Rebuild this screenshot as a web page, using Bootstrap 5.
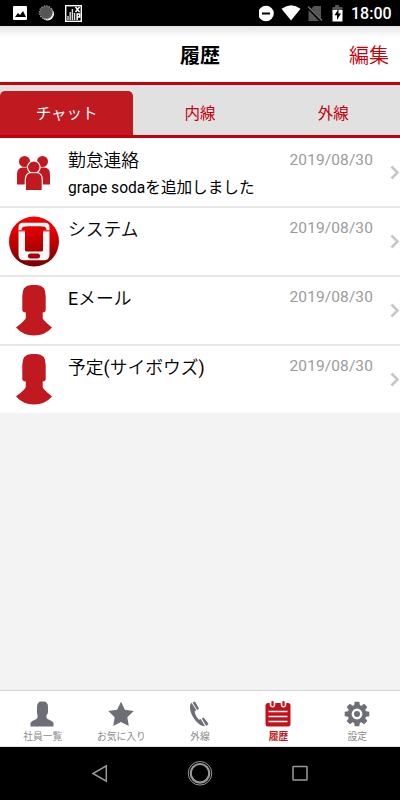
<!DOCTYPE html>
<html lang="ja">
<head>
<meta charset="utf-8">
<meta name="viewport" content="width=device-width, initial-scale=1">
<title>履歴</title>
<link href="https://cdn.jsdelivr.net/npm/bootstrap@5.3.0/dist/css/bootstrap.min.css" rel="stylesheet">
<style>
body{font-family:Roboto,"Noto Sans CJK JP",sans-serif;background:#f3f3f3;color:#000}
svg{display:block;flex:none}
.screen{width:400px;height:800px;overflow:hidden}
.status{height:26px;background:#000;padding:0 9px 0 12px}
.clock{font-size:16px;line-height:28px;padding-top:2px;font-weight:500;color:#fff;width:40px;white-space:nowrap}
.titlebar{height:59px;background:linear-gradient(#e4e4e4,#fff 11px);border-bottom:3px solid #c4000b;display:grid;grid-template-columns:1fr auto 1fr}
.titlebar h1{font-size:20px;line-height:60px;height:56px;font-weight:700;margin:0}
.titlebar a{font-size:20px;line-height:60px;height:56px;font-weight:350;color:#c4000b;text-align:right;padding-right:11px;text-decoration:none}
.tabs{height:53px;background:#e1e1e1;border-bottom:3px solid #c4000b;padding-top:6px}
.tabs .nav-link{height:44px;line-height:46px;padding:0;font-size:15.500px;color:#c4000b;border-radius:5px 5px 0 0}
.tabs .nav-link.active{background:#c01920;color:#fff}
.entry{height:69px;border-bottom:2px solid #e8e8e8;padding:0 0 0 9px}
.entry:first-child{height:70px}
.entry:last-child{border-bottom:0;height:67px}
.pic{width:50px;margin-right:9px}
.entry:not(:first-child) svg{margin-top:-1px}
.ttl{font-size:17.800px;line-height:26px;padding-top:10px;font-weight:350}
.ttl span{font-weight:400}
.entry:not(:first-child) .ttl{padding-top:9px}
.sub{font-size:15.600px;line-height:28px}
.date{font-size:15.500px;line-height:24px;padding-top:10px;color:#9b9b9b;letter-spacing:.1px;margin-right:17px}
.entry:not(:first-child) .date{padding-top:8px}
.bottom{height:57px;background:#fff;border-top:1px solid #d4d4d4;border-bottom:1px solid #dfe4e4;padding:10px 4px 0 3px}
.bottom a{color:#8b8b8b;font-size:9.800px;line-height:14px;text-decoration:none}
.bottom span{margin-top:3px;padding-left:1px}
.bottom a.on{color:#c01920;font-weight:700}
.sys{height:53px;background:#000}
</style>
</head>
<body>
<div class="screen d-flex flex-column">
  <div class="status d-flex align-items-center">
    <svg width="72" height="26" viewBox="0 0 72 26">
      <rect x="1" y="6" width="14" height="14" rx="1" fill="#fff"/><path d="M3 17l3-4 2 2 3-4 3 6z" fill="#000"/>
      <circle cx="35.500" cy="14" r="6.500" fill="#fff"/><circle cx="34" cy="12.500" r="6.500" fill="#555" stroke="#888" stroke-width="1.500" stroke-dasharray="1.500 1"/>
      <rect x="53.700" y="5.700" width="15.600" height="15.600" fill="#000" stroke="#fff" stroke-width="1.400"/>
      <path d="M56 20v-4M58.200 20v-8M60.400 20v-11M62.600 20v-7" stroke="#ddd" stroke-width="1.400" fill="none"/><path d="M63.500 7l4 5m0-5l-4 5M65.200 20v-6h2.500v3h-2.500" stroke="#fff" stroke-width="1.500" fill="none"/>
    </svg>
    <svg class="ms-auto" width="88" height="26" viewBox="1 0 88 26">
      <circle cx="8" cy="13.500" r="7.800" fill="#fff"/><path d="M4 13.500h8" stroke="#000" stroke-width="2"/>
      <path d="M23.500 8.800q10-7 19 0l-9.500 11.700z" fill="#fff"/>
      <path d="M56 6h7v15H50.500V11z" fill="#555"/><path d="M49 6l14 15" stroke="#000" stroke-width="3"/><path d="M50 6.500l14 14" stroke="#777" stroke-width="1.200"/>
      <path d="M77 5h4v2h3.500v5H74.500V7H77z" fill="#555"/><path d="M74.500 10h10v11.500h-10z" fill="#fff"/><path d="M80.500 9l-4 6.300h2.500v4.700l4-6.500h-2.500z" fill="#000"/>
    </svg>
    <span class="clock ms-1">18:00</span>
  </div>
  <header class="titlebar"><span></span><h1>履歴</h1><a href="#">編集</a></header>
  <ul class="nav nav-fill tabs flex-nowrap">
    <li class="nav-item w-100"><a class="nav-link active" href="#">チャット</a></li>
    <li class="nav-item w-100"><a class="nav-link" href="#">内線</a></li>
    <li class="nav-item w-100"><a class="nav-link" href="#">外線</a></li>
  </ul>
  <main class="flex-grow-1">
    <div class="bg-white">
      <div class="entry d-flex">
        <div class="pic"><svg width="50" height="68" viewBox="0 0 50 68" fill="#c01920">
          <circle cx="15.500" cy="23.500" r="5.500"/><circle cx="33.500" cy="23.500" r="5.500"/>
          <path d="M8 46.500V36q0-6.500 6-6.500h5q5 0 5 6v11zM25 46.500V35.500q1-6 6-6h4q6 0 6 6.500v10.500z"/>
          <path d="M16.300 52.500V42q0-6.500 5-7.500a6.300 6.300 0 1 1 7 0q5 1 5 7.500v10.500z" stroke="#fff" stroke-width="1.200"/><path d="M20.500 34.700h8" stroke="#fff"/></svg></div>
        <div class="flex-grow-1"><div class="ttl">勤怠連絡</div><div class="sub">grape sodaを追加しました</div></div>
        <div class="date">2019/08/30</div>
        <svg width="10" height="68" viewBox="0 0 10 68"><path d="M1.500 28.500l6 6-6 6" stroke="#c7c7c7" stroke-width="2.600" fill="none"/></svg>
      </div>
      <div class="entry d-flex">
        <div class="pic"><svg width="50" height="68" viewBox="0 0 50 68">
          <defs><linearGradient id="red" x2="0" y2="1"><stop stop-color="#f80000"/><stop offset=".3" stop-color="#e00000"/><stop offset="1" stop-color="#760006"/></linearGradient><linearGradient id="pane" x2="0" y2="1"><stop stop-color="#e60000"/><stop offset="1" stop-color="#a80000"/></linearGradient></defs>
          <circle cx="25" cy="34.500" r="25" fill="url(#red)"/>
          <path d="M14 15.700h22q4.500 0 4.500 4.500v27.500q0 5.500-6 5.500h-19q-6 0-6-5.500V20.200q0-4.500 4.500-4.500z" fill="#f8f8f8"/>
          <path d="M12.500 23.500q0-4 3.500-4h18q3.500 0 3.500 4z" fill="#e00000"/><path d="M9 23h32v1.500H9z" fill="#e04040"/>
          <path d="M16 43.500V23q0-3.500 3-3.500h12q3 0 3 3.500v20.500q0 1-2 1H18q-2 0-2-1z" fill="url(#pane)"/>
          <rect x="19" y="46.500" width="12" height="5" rx="2.500" fill="#a8000a"/></svg></div>
        <div class="flex-grow-1"><div class="ttl">システム</div></div>
        <div class="date">2019/08/30</div>
        <svg width="10" height="68" viewBox="0 0 10 68"><path d="M1.500 28.500l6 6-6 6" stroke="#c7c7c7" stroke-width="2.600" fill="none"/></svg>
      </div>
      <div class="entry d-flex">
        <div class="pic"><svg width="50" height="68" viewBox="0 1 50 68"><path d="M13.300 21q0-11 9.200-11h5q9.200 0 9.200 11v14q0 2-3 2.500v5.500q0 2 9.300 9.500-7 8-18 8t-18-8q9.800-7.500 9.800-9.500v-5.500q-3.500-.5-3.500-2.500z" fill="#c01920"/></svg></div>
        <div class="flex-grow-1"><div class="ttl"><span>E</span>メール</div></div>
        <div class="date">2019/08/30</div>
        <svg width="10" height="68" viewBox="0 0 10 68"><path d="M1.500 28.500l6 6-6 6" stroke="#c7c7c7" stroke-width="2.600" fill="none"/></svg>
      </div>
      <div class="entry d-flex">
        <div class="pic"><svg width="50" height="68" viewBox="0 1 50 68"><path d="M13.300 21q0-11 9.200-11h5q9.200 0 9.200 11v14q0 2-3 2.500v5.500q0 2 9.300 9.500-7 8-18 8t-18-8q9.800-7.500 9.800-9.500v-5.500q-3.500-.5-3.500-2.500z" fill="#c01920"/></svg></div>
        <div class="flex-grow-1"><div class="ttl">予定<span>(</span>サイボウズ<span>)</span></div></div>
        <div class="date">2019/08/30</div>
        <svg width="10" height="68" viewBox="0 0 10 68"><path d="M1.500 28.500l6 6-6 6" stroke="#c7c7c7" stroke-width="2.600" fill="none"/></svg>
      </div>
    </div>
  </main>
  <nav class="bottom d-flex">
    <a href="#" class="col d-flex flex-column align-items-center"><svg width="26" height="26" viewBox="0 0 26 26" fill="#6d6e76"><path d="M8 6q0-5.500 4.500-5.500h2Q19 .5 19 6v5q0 2-1.500 3v2.500q0 1 3 2.500 4 1.500 4 3.500V25.500h-23v-3q0-2 4-3.500 3-1.500 3-2.500V14Q8 13 8 11z"/></svg><span>社員一覧</span></a>
    <a href="#" class="col d-flex flex-column align-items-center"><svg width="26" height="26" viewBox="0 0 26 26" fill="#6d6e76"><path d="M13 .8l3.900 8 8.800 1.200-6.400 6.200 1.500 8.800L13 21l-7.800 4 1.500-8.800L.3 10l8.800-1.200z"/></svg><span>お気に入り</span></a>
    <a href="#" class="col d-flex flex-column align-items-center"><svg width="26" height="26" viewBox="0 0 26 26" fill="#6d6e76"><path d="M5.500 1.800C3 4 3.500 10 7 16c3.500 5.500 8 9.500 12 9.200l-4.300-7.300-1.700.8C11 17 9 13 8.600 10.500l1.700-1.200z"/><path d="M6.600 1.400L9 .5l4 7.200-1.900 1.200zM15.800 17.400l1.800-1 5 6.500-2.400 2z"/></svg><span>外線</span></a>
    <a href="#" class="col d-flex flex-column align-items-center on"><svg width="26" height="26" viewBox="0 0 26 26"><rect x=".5" y="2" width="25" height="23.500" rx="2.500" fill="#c4101a"/><path d="M5.200 0v3.800a2.300 2.300 0 0 0 4.600 0V0M16.200 0v3.800a2.300 2.300 0 0 0 4.600 0V0" fill="#fff" stroke="#fff" stroke-width="1"/><path d="M7.500 1.200v3M18.500 1.200v3" stroke="#c4101a" stroke-width="2.300" stroke-linecap="round"/><path d="M3.500 10.500h19M3.500 15.500h19M3.500 20.500h19" stroke="#fff" stroke-width="1.600"/></svg><span>履歴</span></a>
    <a href="#" class="col d-flex flex-column align-items-center"><svg width="26" height="26" viewBox="-13 -13 26 26"><g fill="#6d6e76"><circle r="9.300"/><g id="teeth"><path d="M-2.300-12.300h4.600l.8 5h-6.200zM-2.300 12.300h4.600l.8-5h-6.200zM-12.300-2.300v4.600l5 .8v-6.200zM12.300-2.300v4.600l-5 .8v-6.200z"/></g><use href="#teeth" transform="rotate(45)"/></g><circle r="4.200" fill="#6d6e76" stroke="#fff" stroke-width="2.400"/><circle r="1.800" fill="#6d6e76"/></svg><span>設定</span></a>
  </nav>
  <div class="sys d-flex justify-content-center">
    <svg width="400" height="53" viewBox="0 0 400 53" fill="none" stroke="#999" stroke-width="1.500"><path d="M106.300 18.800v15.400L93 26.500z"/><circle cx="200" cy="26.300" r="11.800" stroke-width="1"/><circle cx="200" cy="26.300" r="9.300" stroke-width="2.200"/><rect x="293" y="19.500" width="14" height="13.500" rx=".5"/></svg>
  </div>
</div>
<script src="https://cdn.jsdelivr.net/npm/bootstrap@5.3.0/dist/js/bootstrap.bundle.min.js"></script>
</body>
</html>
